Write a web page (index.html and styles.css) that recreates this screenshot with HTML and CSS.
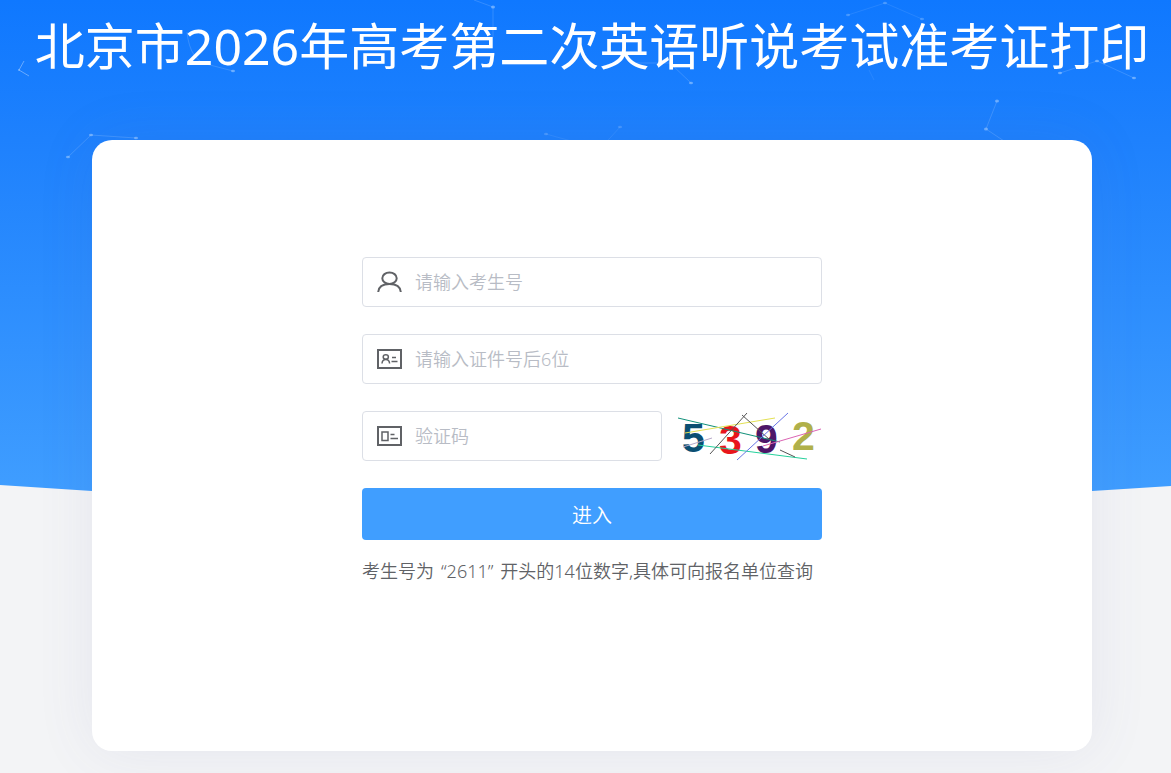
FILE: index.html
```html
<!DOCTYPE html>
<html lang="zh-CN">
<head>
<meta charset="utf-8">
<meta name="viewport" content="width=device-width, initial-scale=1">
<title>北京市2026年高考第二次英语听说考试准考证打印</title>
<link rel="stylesheet" href="styles.css">
</head>
<body>
<svg class="backdrop" viewBox="0 0 1171 500" preserveAspectRatio="none" aria-hidden="true">
  <defs>
    <linearGradient id="sky" x1="0" y1="0" x2="0" y2="1">
      <stop offset="0" stop-color="#0f78ff"/>
      <stop offset="0.28" stop-color="#1e81fd"/>
      <stop offset="1" stop-color="#409eff"/>
    </linearGradient>
  </defs>
  <path d="M0 0H1171V486L1092 491Q592 510 92 491L0 485Z" fill="url(#sky)"/>
  <g class="star-lines">
    <path class="bright" d="M24 61L19 70L29 76"/>
    <path d="M68 157L91 135L136 138"/>
    <path d="M187 32Q190 62 210 65L233 71"/>
    <path d="M474 0L493 7V37"/>
    <path d="M636 63H670L691 83"/>
    <path d="M546 134L600 149L620 127" opacity=".5"/>
    <path d="M848 15L885 3L922 19" opacity=".6"/>
    <path d="M869 70L874 80" opacity=".5"/>
    <path d="M997 101L986 129L1010 145"/>
    <path d="M1060 73L1097 61L1134 78"/>
  </g>
  <g class="stars">
    <ellipse cx="19" cy="70" rx="1" ry="1"/>
    <ellipse cx="68" cy="157" rx="2" ry="1.3"/><ellipse cx="91" cy="135" rx="2" ry="1.3"/><ellipse cx="136" cy="138" rx="2" ry="1.3"/>
    <ellipse cx="233" cy="71" rx="2" ry="1.3"/><ellipse cx="493" cy="7" rx="2" ry="1.5"/><ellipse cx="691" cy="83" rx="2" ry="1.3"/>
    <ellipse cx="546" cy="134" rx="2" ry="1.3" opacity=".5"/><ellipse cx="620" cy="127" rx="2" ry="1.3" opacity=".5"/>
    <ellipse cx="848" cy="15" rx="2" ry="1.3" opacity=".6"/><ellipse cx="885" cy="3" rx="2" ry="1.3" opacity=".6"/><ellipse cx="922" cy="19" rx="2" ry="1.3" opacity=".6"/>
    <ellipse cx="997" cy="101" rx="2" ry="1.5"/><ellipse cx="986" cy="129" rx="2" ry="1.5"/>
    <ellipse cx="1060" cy="73" rx="2" ry="1.3"/><ellipse cx="1097" cy="61" rx="2" ry="1.3"/><ellipse cx="1134" cy="78" rx="2" ry="1.3"/>
  </g>
</svg>
<main class="page">
  <h1 class="title">北京市2026年高考第二次英语听说考试准考证打印</h1>
  <section class="card">
    <form class="form">
      <div class="field">
        <svg class="icon" viewBox="0 0 26 22" aria-hidden="true"><ellipse cx="12.500" cy="7.200" rx="7.200" ry="5.800"/><path d="M1.200 21C1.600 16.300 5.500 13 12.500 13S23.400 16.300 23.800 21"/></svg>
        <input class="input" type="text" aria-label="考生号" placeholder="请输入考生号">
      </div>
      <div class="field">
        <svg class="icon" viewBox="0 0 26 22" aria-hidden="true"><path d="M1 2H24V20H1Z"/><g class="thin"><ellipse cx="8.800" cy="9" rx="2.600" ry="2.200"/><path d="M5 15.500C5.200 12.600 6.400 11.500 8.800 11.500S12.400 12.600 12.600 15.500M15 9.500H19M14.500 13.500H20.500"/></g></svg>
        <input class="input" type="text" aria-label="证件号后6位" placeholder="请输入证件号后6位">
      </div>
      <div class="captcha-row">
        <div class="field">
          <svg class="icon" viewBox="0 0 26 22" aria-hidden="true"><path d="M1 2H24V20H1Z"/><path class="thin" d="M5 7H11V15.500H5ZM13.500 9.500H17.500M13.500 13.500H21"/></svg>
          <input class="input" type="text" aria-label="验证码" placeholder="验证码">
        </div>
        <svg class="captcha" viewBox="0 0 145 50" role="img" aria-label="验证码图片">
          <g class="captcha-digits">
            <text x="5" y="41" fill="#0b4f72">5</text>
            <text x="42" y="43" fill="#e8151c">3</text>
            <text x="78" y="42" fill="#4d1668">9</text>
            <text x="115" y="39" fill="#b0b04a">2</text>
          </g>
          <g class="captcha-lines">
            <path d="M1 7L103 31" stroke="#119079"/>
            <path d="M8 22L98 7" stroke="#e2e052"/>
            <path d="M21 34L130 48" stroke="#25d09b"/>
            <path d="M33 43L70 2M65 4L93 29M103 39L118 46" stroke="#555"/>
            <path d="M60 49L111 2" stroke="#6874e5"/>
            <path d="M86 35L144 18" stroke="#db65b4"/>
            <path d="M6 36L35 27" stroke="#b7a9c8"/>
          </g>
        </svg>
      </div>
      <button class="submit" type="button">进入</button>
      <p class="hint">考生号为<span class="quoted">“2611”</span>开头的14位数字,具体可向报名单位查询</p>
    </form>
  </section>
</main>
</body>
</html>
```
FILE: styles.css
```css
* { box-sizing: border-box; }

body {
  margin: 0;
  min-height: 100vh;
  background: #f3f4f6;
  font-family: "Noto Sans", "Noto Sans CJK SC", sans-serif;
}

.backdrop {
  position: absolute;
  top: 0;
  left: 0;
  z-index: -1;
  width: 100%;
  height: 500px;
}

.star-lines {
  fill: none;
  stroke: #fff;
  stroke-opacity: .15;
}

.star-lines .bright { stroke-opacity: .35; }

.stars { fill: #9fcbff; fill-opacity: .6; }

.page {
  display: flex;
  flex-direction: column;
  align-items: center;
  padding: 0 0 22px 13px;
}

.title {
  margin: 0;
  padding: 8px 0 56px;
  color: #fff;
  font-size: 50px;
  font-weight: 400;
  line-height: 76px;
  text-align: center;
  white-space: nowrap;
}

.card {
  width: 100%;
  max-width: 1000px;
  padding: 117px 24px 166px;
  border-radius: 20px;
  background: #fff;
  box-shadow: 0 0 60px rgba(90, 90, 160, .09);
}

.form {
  display: flex;
  flex-direction: column;
  gap: 27px;
  max-width: 460px;
  margin: 0 auto;
}

.field {
  display: flex;
  flex: 1;
  align-items: center;
  gap: 12px;
  min-width: 0;
  height: 50px;
  padding: 0 14px;
  border: 1px solid #dcdfe6;
  border-radius: 4px;
}

.form > .field { flex: none; }

.icon {
  flex: none;
  width: 26px;
  height: 22px;
  fill: none;
  stroke: #606266;
  stroke-width: 2;
}

.thin { stroke-width: 1.5; }

.input {
  flex: 1;
  min-width: 0;
  padding: 0;
  border: 0;
  outline: 0;
  background: none;
  color: #606266;
  font: inherit;
  font-size: 18px;
  font-weight: 350;
}

.input::placeholder { color: #b8bcc5; opacity: 1; }

.captcha-row { display: flex; gap: 15px; }

.captcha { width: 145px; height: 50px; overflow: visible; }

.captcha-digits {
  font-family: "Liberation Sans", sans-serif;
  font-size: 41px;
  font-weight: 700;
}

.captcha-lines { fill: none; stroke-width: 1; }

.submit {
  height: 52px;
  border: 0;
  border-radius: 4px;
  background: #409eff;
  color: #fff;
  font: inherit;
  font-size: 20px;
  font-weight: 350;
}

.hint {
  margin: -10px 0 0;
  color: #606266;
  font-size: 18px;
  font-weight: 350;
  line-height: 28px;
  white-space: nowrap;
}

.quoted { margin: 0 7px; }
```
